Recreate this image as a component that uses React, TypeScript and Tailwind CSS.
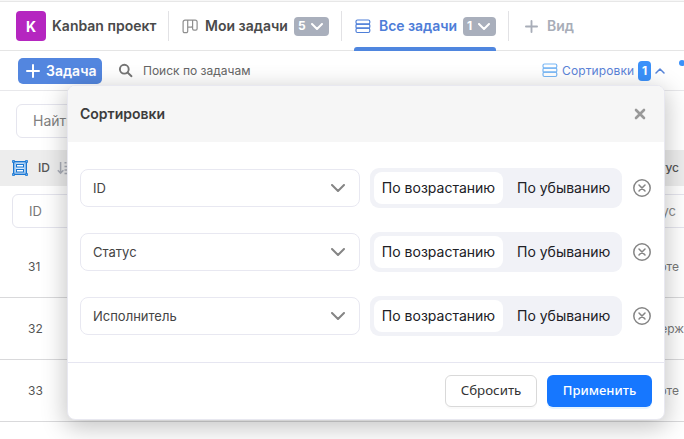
import React from 'react';

function ListIcon({ color, className = '' }: { color: string; className?: string }) {
  return (
    <svg width="16" height="15" viewBox="0 0 16 15" fill="none" stroke={color} strokeWidth="1.2" className={'shrink-0 ' + className}>
      <rect x="1" y="1" width="13.8" height="4.1" rx="1.5" />
      <rect x="1" y="5.1" width="13.8" height="4.1" rx="1.2" />
      <rect x="1" y="9.2" width="13.8" height="4.3" rx="1.5" />
    </svg>
  );
}

function BoardIcon() {
  return (
    <svg width="16" height="15" viewBox="0 0 16 15" fill="none" stroke="#8e8e8e" strokeWidth="1.2" className="shrink-0">
      <path d="M3 1.2h10.2a1.9 1.9 0 0 1 1.9 1.9v6.7a1.3 1.3 0 0 1-1.3 1.3h-1.9a1.3 1.3 0 0 1-1.3-1.3V1.2M3 1.2a1.9 1.9 0 0 0-1.9 1.9v9.2a1.4 1.4 0 0 0 1.4 1.4h1.8a1.4 1.4 0 0 0 1.4-1.4V1.2M5.7 8.2h3.5a1.4 1.4 0 0 0 1.4-1.4" />
    </svg>
  );
}

function Plus({ color, size, width }: { color: string; size: number; width: number }) {
  return (
    <svg width={size} height={size} viewBox="0 0 14 14" stroke={color} strokeWidth={width} strokeLinecap="round" className="shrink-0">
      <path d="M7 1v12M1 7h12" />
    </svg>
  );
}

function Chevron({ color, w, h, stroke = 2, up = false }: { color: string; w: number; h: number; stroke?: number; up?: boolean }) {
  return (
    <svg width={w} height={h} viewBox={`0 0 ${w} ${h}`} fill="none" stroke={color} strokeWidth={stroke} strokeLinecap="round" strokeLinejoin="round" className="shrink-0">
      <path d={up ? `M1 ${h - 1}L${w / 2} 1L${w - 1} ${h - 1}` : `M1 1L${w / 2} ${h - 1}L${w - 1} 1`} />
    </svg>
  );
}

function IdIcon() {
  return (
    <svg width="16" height="16" viewBox="0 0 16 16" fill="none" stroke="#1976d2" className="shrink-0">
      <rect x="1.5" y="1.5" width="13" height="13" fill="#d5e8fa" />
      <rect x="4.5" y="4.5" width="7" height="2.5" fill="#fff" />
      <rect x="4.5" y="9.5" width="7" height="2.5" fill="#fff" />
      <path d="M2.8 2.8h10.4v10.4H2.8z" strokeWidth="0.6" />
      <g fill="#64a9eb" strokeWidth="0.8">
        <path d="M.5.5h2v2h-2zM13.5.5h2v2h-2zM.5 13.5h2v2h-2zM13.5 13.5h2v2h-2z" />
      </g>
    </svg>
  );
}

function SortIcon() {
  return (
    <svg width="16" height="14" viewBox="0 0 16 14" fill="none" stroke="#a9adb7" strokeWidth="1.5" className="-ml-px shrink-0">
      <path d="M3.6 1v11M.8 9.2l2.8 2.9 2.8-2.9M7.5 1.8h2M7.5 5.4h4M7.5 9h6M7.5 12.5h8" />
    </svg>
  );
}

function SortRow({ label }: { label: string }) {
  return (
    <div className="flex h-10 items-center">
      <div className="flex h-[38px] w-[280px] items-center justify-between rounded-lg border border-[#e8e8f1] pl-3 pr-[14px] text-[13px] text-[#444]">
        <span className="pt-0.5">{label}</span>
        <Chevron color="#858585" w={14} h={8} />
      </div>
      <div className="ml-[10px] flex h-10 w-[252px] items-center rounded-[9px] bg-[#f1f2f7] p-1 text-[14px] text-[#202025]">
        <span className="flex h-8 w-[129px] items-center justify-center whitespace-nowrap rounded-lg bg-white pb-px">По возрастанию</span>
        <span className="flex-1 whitespace-nowrap pb-px pl-[14px]">По убыванию</span>
      </div>
      <svg width="20" height="20" viewBox="0 0 20 20" fill="none" stroke="#858585" strokeWidth="1.5" strokeLinecap="round" className="ml-[10px] shrink-0">
        <circle cx="10" cy="10" r="8.2" />
        <path d="M7 7l6 6M13 7l-6 6" />
      </svg>
    </div>
  );
}

function SortDialog() {
  return (
    <section className="absolute left-[67px] top-[85px] flex h-[335px] w-[598px] flex-col overflow-hidden rounded-lg border border-[#e8e8f0] bg-white shadow-[0_6px_24px_2px_rgba(0,0,0,0.23)]">
      <header className="flex h-14 items-center justify-between bg-[#f6f6f6] pl-3 pr-[18px]">
        <h2 className="pb-px text-[14px] font-semibold text-[#3c3c3c]">Сортировки</h2>
        <svg width="12" height="12" viewBox="0 0 12 12" stroke="#999" strokeWidth="2.6" strokeLinecap="round">
          <path d="M2 2l8 8M10 2l-8 8" />
        </svg>
      </header>
      <div className="flex flex-1 flex-col gap-6 pl-3 pt-[26px]">
        <SortRow label="ID" />
        <SortRow label="Статус" />
        <SortRow label="Исполнитель" />
      </div>
      <footer className="flex h-[57px] items-center justify-end gap-[10px] border-t border-[#e6e6f1] pr-3 font-['Noto_Sans',sans-serif] text-[14px]">
        <button className="h-8 w-[92px] rounded-md border border-[#d9d9d9] bg-white text-[13.3px] text-[#333] shadow-[0_2px_0_rgba(0,0,0,0.02)]">Сбросить</button>
        <button className="h-8 w-[105px] rounded-md bg-[#1677ff] text-[13px] font-medium text-white shadow-[0_2px_0_rgba(5,145,255,0.1)]">Применить</button>
      </footer>
    </section>
  );
}

export default function App() {
  return (
    <main className="relative h-[439px] w-[684px] overflow-hidden bg-white font-['Inter',sans-serif] text-[#4a4a4a]">
      <nav className="flex h-[51px] items-center border-b border-[#e5e5e5] shadow-[inset_0_1px_0_#f7f7f7,inset_0_2px_0_#e7e7e7]">
        <div className="ml-4 mt-[2px] flex size-[30px] items-center justify-center rounded bg-[#b526c0] text-[14px] font-bold text-white">K</div>
        <span className="ml-[6px] w-[116px] whitespace-nowrap text-[14px] font-semibold">Kanban проект</span>
        <div className="mt-[2px] flex h-[30px] w-[173px] items-center border-l border-[#e2e2e5] pl-[13px]">
          <BoardIcon />
          <span className="ml-[7px] w-[89px] whitespace-nowrap pb-0.5 text-[14px] font-semibold">Мои задачи</span>
          <span className="flex h-[19px] w-[35px] items-center justify-between rounded bg-[#a9afbc] pl-1 pr-[6px] text-[12px] font-bold text-white">
            5<Chevron color="#fff" w={12} h={7} />
          </span>
        </div>
        <div className="flex h-full w-[167px] flex-col justify-between">
          <div className="mt-[11px] flex h-[30px] w-[167px] items-center border-l border-[#e2e2e5] pl-[13px]">
            <ListIcon color="#4e7fd8" />
            <span className="ml-[8px] w-[84px] whitespace-nowrap pb-0.5 text-[14px] font-semibold tracking-[-0.05px] text-[#4e7dd8]">Все задачи</span>
            <span className="flex h-[19px] w-[33px] items-center justify-between rounded bg-[#a9afbc] pl-1 pr-[6px] text-[12px] font-bold text-white">
              1<Chevron color="#fff" w={12} h={7} />
            </span>
          </div>
          <div className="ml-[13px] -mb-px h-1 w-[142px] rounded-t-[3px] bg-[#4f86df]" />
        </div>
        <div className="mt-[2px] flex h-[30px] flex-1 items-center border-l border-[#e2e2e5] pl-4 text-[14px] font-semibold text-[#a8adb8]">
          <Plus color="#a8adb8" size={13} width={2} />
          <span className="ml-[9px] pb-0.5">Вид</span>
        </div>
      </nav>

      <div className="flex h-10 items-center border-b border-[#e8e8eb]">
        <button className="ml-[18px] flex h-[26px] w-[84px] items-center rounded-[5px] bg-[#5386df] pl-[8px] text-[14px] font-semibold text-white">
          <Plus color="#fff" size={14} width={2} />
          <span className="ml-[6px]">Задача</span>
        </button>
        <svg width="15" height="15" viewBox="0 0 15 15" fill="none" stroke="#757575" strokeWidth="1.9" strokeLinecap="round" className="ml-[16px]">
          <circle cx="6.3" cy="6.2" r="4.4" />
          <path d="M9.8 9.7l3.7 3.5" />
        </svg>
        <span className="ml-[10px] w-[398.5px] text-[12px] text-[#666]">Поиск по задачам</span>
        <ListIcon color="#79b7f5" />
        <span className="ml-[4.5px] w-[76px] whitespace-nowrap pt-px text-[12px] tracking-[0.12px] text-[#5b83d8]">Сортировки</span>
        <span className="flex h-5 w-[13px] items-center justify-center rounded bg-[#3b91fa] text-[12px] font-bold text-white">1</span>
        <span className="ml-1"><Chevron color="#5684d9" w={10} h={6} stroke={1.5} up /></span>
      </div>

      <div className="flex h-[59px] items-center pl-4">
        <div className="mt-px flex h-[34px] w-[250px] items-center rounded-md border border-[#e5e5ee] pb-0.5 pl-4 text-[14px] text-[#808080]">Найти</div>
      </div>

      <div className="flex h-9 items-center bg-[#ededed] text-[12px] font-medium">
        <span className="ml-3"><IdIcon /></span>
        <span className="ml-[10px] w-[20px] text-[#555]">ID</span>
        <SortIcon />
        <span className="ml-auto mr-[5px] text-[#555]">Статус</span>
      </div>

      <div className="flex h-[42px] justify-between pt-2">
        <div className="ml-3 flex h-[34px] w-[120px] items-center rounded-md border border-[#e5e5ee] pl-4 pt-0.5 text-[13px] text-[#777]">ID</div>
        <div className="flex h-[34px] w-[90px] items-center justify-end border-y border-[#e5e5ee] pr-[8px] pt-0.5 text-[13px] text-[#888]">Статус</div>
      </div>
      {[
        ['31', 'В работе'],
        ['32', 'Задерж'],
        ['33', 'В работе'],
      ].map(([id, status], i) => (
        <div key={id} className={(i === 0 ? 'h-[70px] pt-2 ' : 'h-[62px] ') + 'flex items-center justify-between border-b border-[#d9d9db] text-[12px] text-[#555]'}>
          <span className="ml-7">{id}</span>
          <span className={'text-[#777] ' + (i === 1 ? 'mr-0' : 'mr-[5px]')}>{status}</span>
        </div>
      ))}
      <span className="absolute left-[679px] top-[60px] size-[6px] rounded-full bg-[#3b91fa]" />
      <SortDialog />
    </main>
  );
}
